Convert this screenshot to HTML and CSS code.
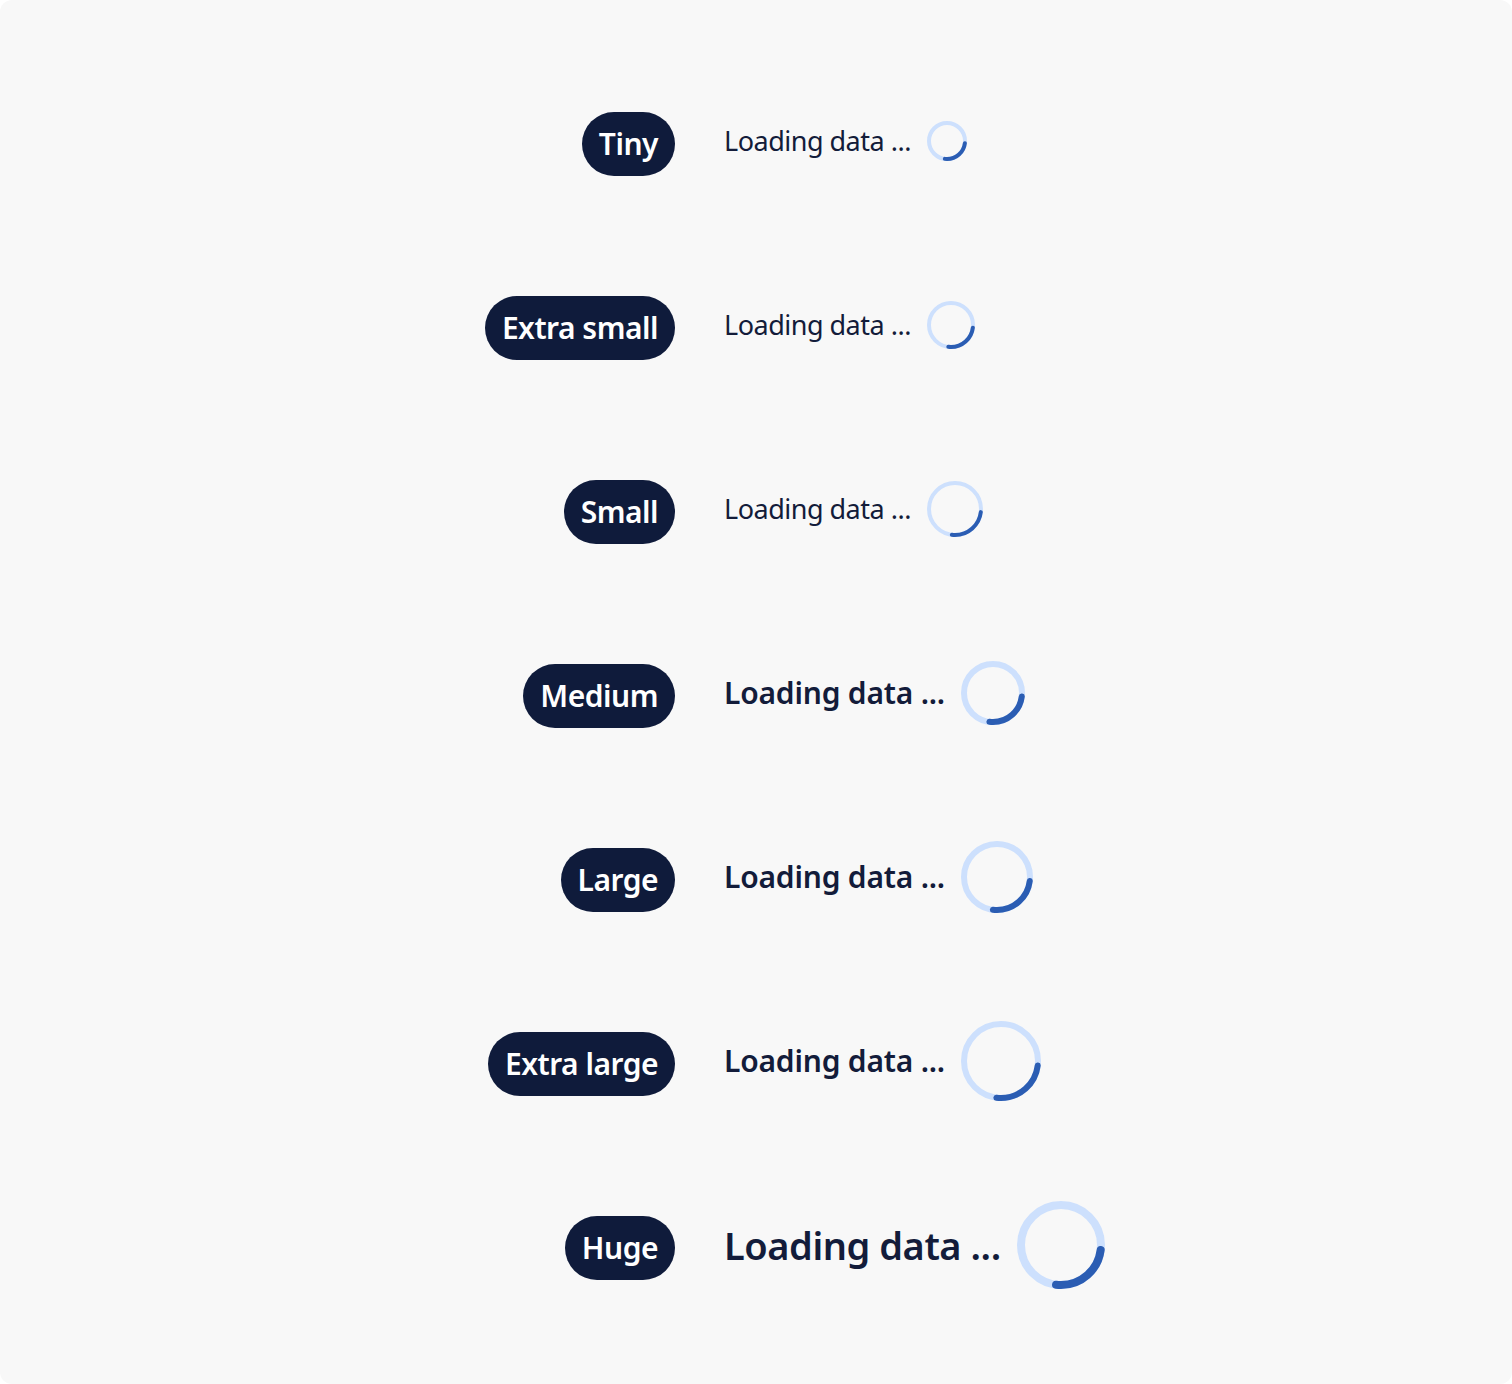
FILE: index.html
```html
<!DOCTYPE html>
<html lang="en">
<head>
    <meta charset="UTF-8">
    <meta name="viewport" content="width=device-width, initial-scale=1.0">
    <title>Spinner sizes</title>
    <link rel="stylesheet" href="styles.css">
</head>
<body>
    <main class="board">
        <div class="sizes">
            <span class="badge">Tiny</span>
            <div class="spinner">
                <span class="label">Loading data ...</span>
                <svg width="40" height="40" viewBox="0 0 40 40">
                    <circle class="track" cx="20" cy="20" r="18" stroke-width="4"/>
                    <circle class="arc" cx="20" cy="20" r="18" stroke-width="4" pathLength="100"/>
                </svg>
            </div>

            <span class="badge">Extra small</span>
            <div class="spinner">
                <span class="label">Loading data ...</span>
                <svg width="48" height="48" viewBox="0 0 48 48">
                    <circle class="track" cx="24" cy="24" r="22" stroke-width="4"/>
                    <circle class="arc" cx="24" cy="24" r="22" stroke-width="4" pathLength="100"/>
                </svg>
            </div>

            <span class="badge">Small</span>
            <div class="spinner">
                <span class="label">Loading data ...</span>
                <svg width="56" height="56" viewBox="0 0 56 56">
                    <circle class="track" cx="28" cy="28" r="26" stroke-width="4"/>
                    <circle class="arc" cx="28" cy="28" r="26" stroke-width="4" pathLength="100"/>
                </svg>
            </div>

            <span class="badge">Medium</span>
            <div class="spinner">
                <span class="label label-strong">Loading data ...</span>
                <svg width="64" height="64" viewBox="0 0 64 64">
                    <circle class="track" cx="32" cy="32" r="29" stroke-width="6"/>
                    <circle class="arc" cx="32" cy="32" r="29" stroke-width="6" pathLength="100"/>
                </svg>
            </div>

            <span class="badge">Large</span>
            <div class="spinner">
                <span class="label label-strong">Loading data ...</span>
                <svg width="72" height="72" viewBox="0 0 72 72">
                    <circle class="track" cx="36" cy="36" r="33" stroke-width="6"/>
                    <circle class="arc" cx="36" cy="36" r="33" stroke-width="6" pathLength="100"/>
                </svg>
            </div>

            <span class="badge">Extra large</span>
            <div class="spinner">
                <span class="label label-strong">Loading data ...</span>
                <svg width="80" height="80" viewBox="0 0 80 80">
                    <circle class="track" cx="40" cy="40" r="37" stroke-width="6"/>
                    <circle class="arc" cx="40" cy="40" r="37" stroke-width="6" pathLength="100"/>
                </svg>
            </div>

            <span class="badge">Huge</span>
            <div class="spinner">
                <span class="label label-huge">Loading data ...</span>
                <svg width="88" height="88" viewBox="0 0 88 88">
                    <circle class="track" cx="44" cy="44" r="40" stroke-width="8"/>
                    <circle class="arc" cx="44" cy="44" r="40" stroke-width="8" pathLength="100"/>
                </svg>
            </div>
        </div>
    </main>
</body>
</html>
```

FILE: styles.css
```css
body {
    margin: 0;
    background-color: #ffffff;
    font-family: "Noto Sans", "Open Sans", sans-serif;
}
.board {
    box-sizing: border-box;
    height: 1384px;
    background-color: #f8f8f8;
    border-radius: 12px;
    padding-top: 52px;
}
.sizes {
    display: grid;
    grid-template-columns: 675px auto;
    grid-auto-rows: 184px;
    column-gap: 49px;
    align-items: center;
}
.badge {
    justify-self: end;
    background-color: #0f1b3b;
    color: white;
    font-size: 30px;
    font-weight: 600;
    letter-spacing: -0.5px;
    line-height: 64px;
    height: 64px;
    padding: 0 17px;
    border-radius: 32px;
}
.spinner {
    display: flex;
    align-items: center;
    gap: 16px;
    margin-bottom: 7px;
}
.label {
    color: #131c3a;
    font-size: 27px;
    font-weight: 400;
    letter-spacing: -0.5px;
}
.label-strong {
    font-size: 30px;
    font-weight: 600;
    letter-spacing: -0.2px;
}
.label-huge {
    font-size: 38px;
    font-weight: 600;
    letter-spacing: -0.45px;
}
.spinner svg circle {
    fill: none;
}
.spinner .track {
    stroke: #cde0fd;
}
.spinner .arc {
    stroke: #2b5db3;
    stroke-linecap: round;
    stroke-dasharray: 25 100;
    stroke-dashoffset: -2;
}
```
